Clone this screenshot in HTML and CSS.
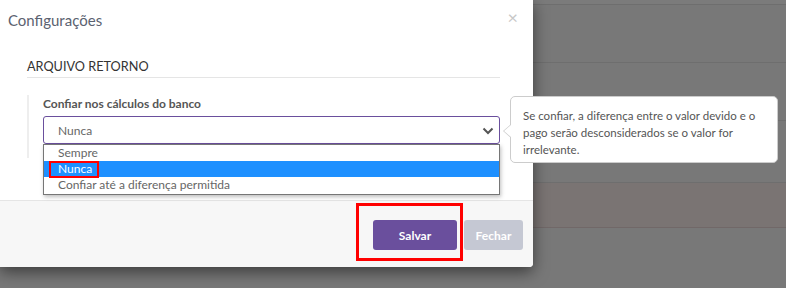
FILE: index.html
```html
<!DOCTYPE html>
<html lang="pt-BR">
<head>
    <meta charset="UTF-8">
    <meta name="viewport" content="width=device-width, initial-scale=1.0">
    <title>Configurações</title>
    <link rel="stylesheet" href="styles.css">
</head>
<body>
    <!-- page behind the modal -->
    <div class="backdrop">
        <div class="bg-row row-top"></div>
        <div class="bg-row row-a"></div>
        <div class="bg-row row-b"></div>
        <div class="bg-row row-c"></div>
        <div class="bg-row row-d"></div>
        <div class="bg-row row-e"></div>
    </div>

    <div class="modal">
        <div class="modal-header">
            <h4>Configurações</h4>
            <span class="close">&times;</span>
        </div>

        <div class="modal-body">
            <h5 class="section-title">ARQUIVO RETORNO</h5>
            <div class="field-group">
                <label for="confiar">Confiar nos cálculos do banco</label>
                <div class="select-box" id="confiar">
                    <span>Nunca</span>
                    <svg class="chevron" width="12" height="8" viewBox="0 0 12 8">
                        <path d="M1.5 1.5 L6 6 L10.5 1.5" fill="none" stroke="#555" stroke-width="2"/>
                    </svg>
                </div>
            </div>
        </div>

        <div class="modal-footer">
            <button class="btn btn-save">Salvar</button>
            <button class="btn btn-close">Fechar</button>
        </div>

        <!-- open select list -->
        <ul class="dropdown">
            <li>Sempre</li>
            <li class="selected">Nunca</li>
            <li>Confiar até a diferença permitida</li>
        </ul>

        <div class="mark mark-option"></div>
        <div class="mark mark-save"></div>
    </div>

    <div class="tooltip">
        Se confiar, a diferença entre o valor devido e o pago serão desconsiderados se o valor for irrelevante.
    </div>
</body>
</html>
```

FILE: styles.css
```css
:root {
    --purple: #6a4f9d;
    --text: #555;
    --muted: #666;
    --line: #e5e5e5;
}

* {
    box-sizing: border-box;
    margin: 0;
    padding: 0;
}

body {
    font-family: 'Lato', 'Open Sans', Arial, sans-serif;
    background: #777;
    width: 786px;
    height: 288px;
    overflow: hidden;
    position: relative;
}

/* background page rows */
.backdrop {
    display: flex;
    flex-direction: column;
}

.bg-row {
    border-bottom: 1px solid #6e6e6e;
    background: #787878;
}

.row-top { height: 5px; background: #7b7b7b; }
.row-a { height: 58px; }
.row-b { height: 58px; }
.row-c { height: 62px; }
.row-d { height: 45px; background: #7a7473; border-bottom-color: #716868; }
.row-e { height: 60px; border-bottom: none; }

/* modal */
.modal {
    position: absolute;
    top: 0;
    left: 0;
    width: 533px;
    height: 267px;
    background: #fff;
    border-bottom-right-radius: 4px;
    box-shadow: 0 5px 15px rgba(0, 0, 0, 0.5);
    display: flex;
    flex-direction: column;
}

.modal-header {
    display: flex;
    justify-content: space-between;
    padding: 10px 15px 0 8px;
    height: 58px;
}

.modal-header h4 {
    font-size: 15px;
    font-weight: 400;
    color: #5b6270;
    line-height: 20px;
}

.close {
    font-size: 18px;
    color: #c8c8c8;
    line-height: 14px;
    margin-top: 0;
}

.modal-body {
    padding: 0 33px 0 27px;
    height: 142px;
}

.section-title {
    font-size: 12.7px;
    font-weight: 400;
    color: #333;
    line-height: 16px;
    padding-bottom: 3px;
    border-bottom: 1px solid var(--line);
    margin-bottom: 17px;
}

.field-group {
    border-left: 2px solid #eee;
    padding: 2px 0 14px 14px;
    height: 63px;
}

.field-group label {
    display: block;
    font-size: 12px;
    font-weight: 700;
    color: var(--text);
    line-height: 14px;
    margin-bottom: 5px;
}

.select-box {
    height: 28px;
    border: 1px solid var(--purple);
    border-radius: 3px;
    display: flex;
    align-items: center;
    justify-content: space-between;
    padding: 0 5px 0 14px;
    font-size: 12px;
    color: var(--muted);
}

.chevron {
    margin-top: 1px;
}

.modal-footer {
    flex: 1;
    background: #f7f7f7;
    border-top: 1px solid var(--line);
    border-bottom-right-radius: 4px;
    display: flex;
    justify-content: flex-end;
    align-items: flex-start;
    gap: 7px;
    padding: 19px 10px 0 0;
}

.btn {
    height: 30px;
    border: none;
    border-radius: 3px;
    color: #fff;
    font-family: inherit;
    font-size: 12px;
    font-weight: 700;
}

.btn-save {
    width: 84px;
    background: var(--purple);
}

.btn-close {
    width: 59px;
    background: #c5c8d3;
}

/* open select list */
.dropdown {
    position: absolute;
    top: 144px;
    left: 43px;
    width: 457px;
    list-style: none;
    background: #fff;
    border: 1px solid #767676;
    box-shadow: 1px 2px 4px rgba(0, 0, 0, 0.25);
    padding: 0 0 1px;
}

.dropdown li {
    height: 16px;
    line-height: 16px;
    font-size: 12px;
    color: var(--muted);
    padding-left: 14px;
}

.dropdown li.selected {
    background: #1e90ff;
    color: #fff;
}

/* red annotation boxes */
.mark {
    position: absolute;
    border: 2px solid #f00;
}

.mark-option {
    top: 161px;
    left: 49px;
    width: 50px;
    height: 17px;
}

.mark-save {
    top: 203px;
    left: 356px;
    width: 107px;
    height: 58px;
    border-width: 3px;
}

/* help tooltip */
.tooltip {
    position: absolute;
    top: 96px;
    left: 510px;
    width: 268px;
    height: 67px;
    background: #fff;
    border: 1px solid #ccc;
    border-radius: 5px;
    padding: 10px 8px 0 12px;
    font-size: 11.5px;
    line-height: 17px;
    color: var(--text);
}

.tooltip::before,
.tooltip::after {
    content: "";
    position: absolute;
    top: 27px;
    border-style: solid;
    border-color: transparent;
}

.tooltip::before {
    left: -8px;
    border-width: 7px 8px 7px 0;
    border-right-color: #ccc;
}

.tooltip::after {
    left: -7px;
    top: 28px;
    border-width: 6px 7px 6px 0;
    border-right-color: #fff;
}
```
